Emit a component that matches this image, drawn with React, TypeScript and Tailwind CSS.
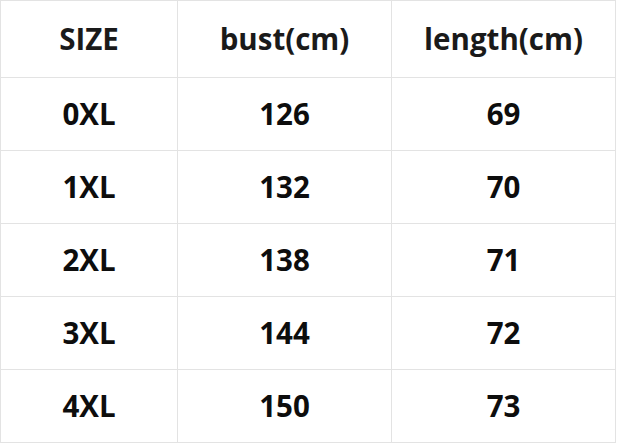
import React from 'react';

const rows = [
  ['0XL', '126', '69'],
  ['1XL', '132', '70'],
  ['2XL', '138', '71'],
  ['3XL', '144', '72'],
  ['4XL', '150', '73'],
];

const cell = 'flex items-center justify-center border-r border-b border-[#e3e3e3]';

export default function App() {
  return (
    <div className="w-[619px] h-[444px] bg-white" style={{ fontFamily: '"Open Sans", "Noto Sans", sans-serif' }}>
      <div className="grid grid-cols-[177px_214px_224px] w-max border-l border-t border-[#e3e3e3] font-bold text-[29.5px] text-[#0d0d0d]">
        {/* header */}
        <div className={`${cell} h-[77px] text-[#1a1a1a]`}>SIZE</div>
        <div className={`${cell} h-[77px] text-[#1a1a1a]`}>bust(cm)</div>
        <div className={`${cell} h-[77px] text-[#1a1a1a]`}>length(cm)</div>

        {rows.map((r) =>
          r.map((v, i) => (
            <div key={r[0] + i} className={`${cell} h-[73px]`}>
              {v}
            </div>
          ))
        )}
      </div>
    </div>
  );
}
